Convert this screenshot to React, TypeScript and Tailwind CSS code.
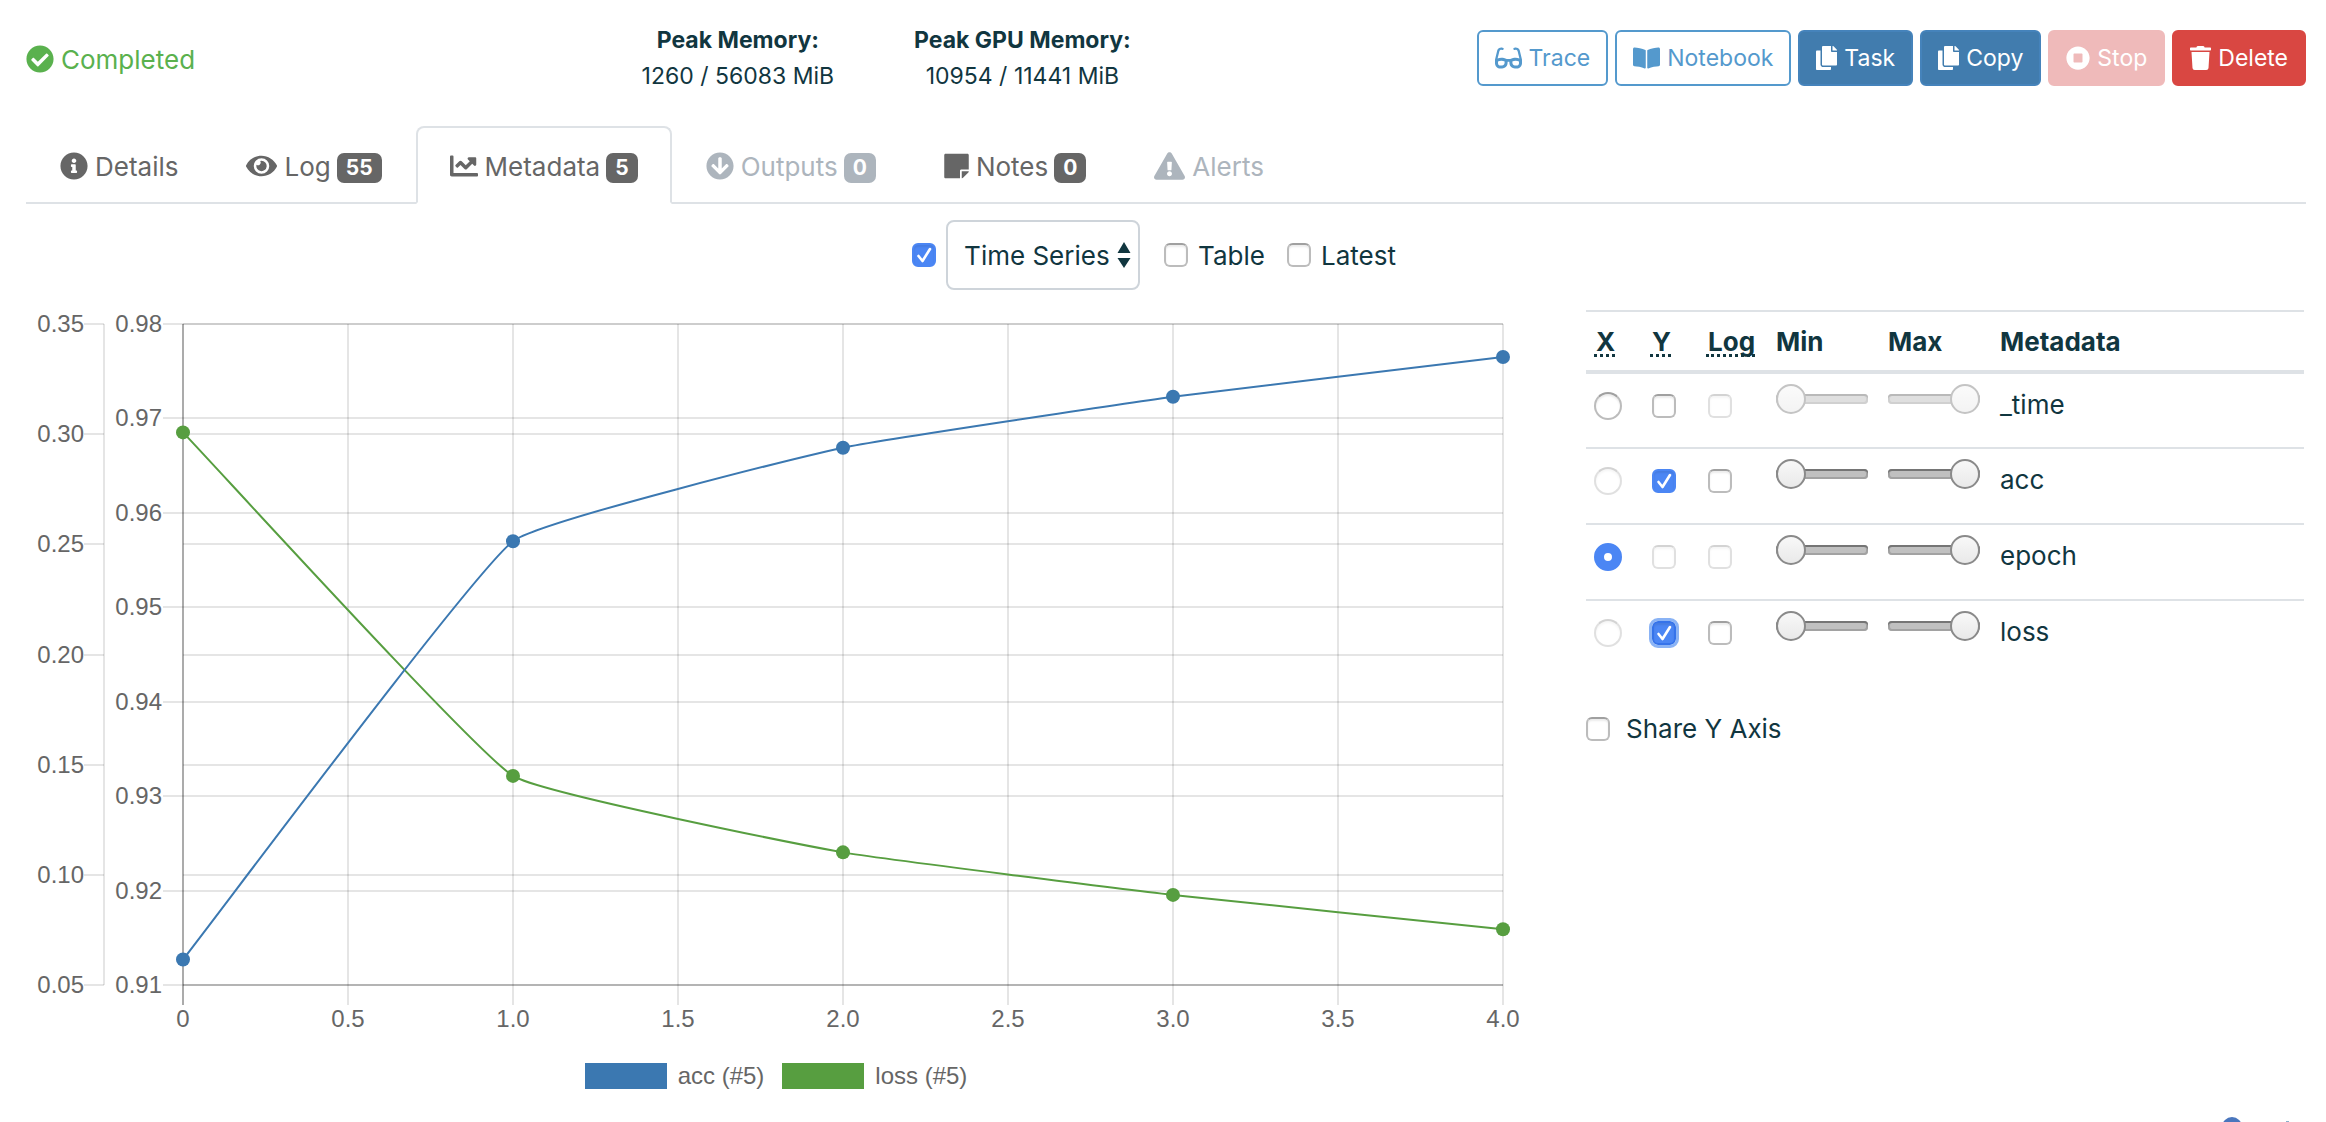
import React from "react";
import {
  FaBookOpen,
  FaCheckCircle,
  FaChartLine,
  FaCopy,
  FaExclamationTriangle,
  FaEye,
  FaGlasses,
  FaArrowCircleDown,
  FaInfoCircle,
  FaStickyNote,
  FaStopCircle,
  FaTrash,
} from "react-icons/fa";

type IconType = React.ComponentType<{ className?: string }>;

/* ---------- form controls ---------- */

type CheckProps = {
  id: string;
  label?: string;
  checked?: boolean;
  disabled?: boolean;
  ring?: boolean;
};

function Check({ id, label, checked, disabled, ring }: CheckProps) {
  return (
    <span className={`inline-grid size-6 shrink-0 ${disabled ? "opacity-45" : ""}`}>
      <input
        id={id}
        type="checkbox"
        aria-label={label}
        defaultChecked={checked}
        disabled={disabled}
        className={`peer [grid-area:1/1] size-6 appearance-none rounded-[6px] border-2 border-[#bcbcbc] border-t-[#a0a0a0] bg-white shadow-[inset_0_2px_2px_rgba(0,0,0,0.08)] checked:border-[#4b86f4] checked:bg-[#4b86f4] ${
          ring ? "outline-3 outline-[#8ab3f5] checked:border-[#3573ea]" : ""
        }`}
      />
      <svg
        viewBox="0 0 24 24"
        className="pointer-events-none invisible [grid-area:1/1] size-6 peer-checked:visible"
        aria-hidden="true"
      >
        <path
          d="M6.500 13l4 5L18 6"
          fill="none"
          stroke="white"
          strokeWidth="2.6"
          strokeLinecap="round"
          strokeLinejoin="round"
        />
      </svg>
    </span>
  );
}

function Radio({ label, checked, disabled }: { label: string; checked?: boolean; disabled?: boolean }) {
  return (
    <input
      type="radio"
      name="x-axis"
      aria-label={label}
      defaultChecked={checked}
      disabled={disabled}
      className="block size-7 appearance-none rounded-full border-2 border-[#bcbcbc] border-t-[#a0a0a0] bg-white shadow-[inset_0_2px_2px_rgba(0,0,0,0.08)] checked:border-[10px] checked:border-[#4b86f4] checked:shadow-none disabled:opacity-45"
    />
  );
}

function Range({ label, value, disabled }: { label: string; value: number; disabled?: boolean }) {
  return (
    <input
      type="range"
      aria-label={label}
      defaultValue={value}
      disabled={disabled}
      className="block h-[30px] w-[92px] appearance-none bg-transparent disabled:opacity-50 [&::-webkit-slider-runnable-track]:h-[10px] [&::-webkit-slider-runnable-track]:rounded-[4px] [&::-webkit-slider-runnable-track]:bg-[#c0c0c0] [&::-webkit-slider-runnable-track]:shadow-[inset_0_2px_0_#757575,inset_0_0_0_2px_#a2a2a2] [&::-webkit-slider-thumb]:-mt-[10px] [&::-webkit-slider-thumb]:size-[30px] [&::-webkit-slider-thumb]:appearance-none [&::-webkit-slider-thumb]:rounded-full [&::-webkit-slider-thumb]:border-2 [&::-webkit-slider-thumb]:border-[#8a8a8a] [&::-webkit-slider-thumb]:bg-linear-to-b [&::-webkit-slider-thumb]:from-[#f8f8f8] [&::-webkit-slider-thumb]:to-[#e9e9e9]"
    />
  );
}

/* ---------- header ---------- */

const outline = "border-[#5499cd] bg-white text-[#5499cd]";
const primary = "border-[#4583bb] bg-[#417cae] text-white";

const actions: { label: string; Icon: IconType; width: string; style: string; disabled?: boolean }[] = [
  { label: "Trace", Icon: FaGlasses, width: "w-[27px]", style: outline },
  { label: "Notebook", Icon: FaBookOpen, width: "w-[27px]", style: outline },
  { label: "Task", Icon: FaCopy, width: "w-[21px]", style: primary },
  { label: "Copy", Icon: FaCopy, width: "w-[21px]", style: primary },
  {
    label: "Stop",
    Icon: FaStopCircle,
    width: "w-6",
    style: "border-[#efbaba] bg-[#efbaba] text-white",
    disabled: true,
  },
  { label: "Delete", Icon: FaTrash, width: "w-[21px]", style: "border-[#d94742] bg-[#d94742] text-white" },
];

function Header() {
  return (
    <header className="flex items-center pt-[22px] pb-8">
      <div className="flex w-[27%] items-center gap-[7px] pt-[2px] text-[26px] text-[#5ab14e]">
        <FaCheckCircle className="size-7" />
        Completed
      </div>
      <dl className="flex gap-20 text-center text-[23px] leading-9">
        <div>
          <dt className="font-bold">Peak Memory:</dt>
          <dd>1260 / 56083 MiB</dd>
        </div>
        <div>
          <dt className="font-bold">Peak GPU Memory:</dt>
          <dd>10954 / 11441 MiB</dd>
        </div>
      </dl>
      <div className="ml-auto flex gap-[7px]">
        {actions.map(({ label, Icon, width, style, disabled }) => (
          <button
            key={label}
            type="button"
            disabled={disabled}
            className={`flex h-14 items-center gap-[7px] rounded-[6px] border-2 px-4 text-[23px] ${style}`}
          >
            <Icon className={`h-6 shrink-0 ${width}`} />
            {label}
          </button>
        ))}
      </div>
    </header>
  );
}

/* ---------- tabs ---------- */

const tabs: {
  label: string;
  Icon: IconType;
  width: string;
  count?: number;
  active?: boolean;
  disabled?: boolean;
}[] = [
  { label: "Details", Icon: FaInfoCircle, width: "w-7" },
  { label: "Log", Icon: FaEye, width: "w-[31px]", count: 55 },
  { label: "Metadata", Icon: FaChartLine, width: "w-7", count: 5, active: true },
  { label: "Outputs", Icon: FaArrowCircleDown, width: "w-7", count: 0, disabled: true },
  { label: "Notes", Icon: FaStickyNote, width: "w-[25px]", count: 0 },
  { label: "Alerts", Icon: FaExclamationTriangle, width: "w-[31px]", disabled: true },
];

function Tabs() {
  return (
    <nav className="flex border-b-2 border-[#dee2e6]">
      {tabs.map(({ label, Icon, width, count, active, disabled }) => (
        <a
          key={label}
          href={`#${label.toLowerCase()}`}
          aria-current={active ? "page" : undefined}
          aria-disabled={disabled}
          className={`-mb-[2px] flex h-[78px] items-center gap-1.5 rounded-t-[8px] border-2 px-8 pt-[2px] text-[26px] ${
            active ? "border-[#dee2e6] border-b-white bg-white" : "border-transparent"
          } ${disabled ? "text-[#adb5bd]" : "text-[#666]"}`}
        >
          <Icon className={`mr-px h-7 shrink-0 ${width}`} />
          {label}
          {count !== undefined && (
            <span
              className={`mt-1 rounded-[7px] px-[9px] text-[21px] leading-[30px] font-bold text-white ${
                disabled ? "bg-[#adb5bd]" : "bg-[#666]"
              }`}
            >
              {count}
            </span>
          )}
        </a>
      ))}
    </nav>
  );
}

/* ---------- view options ---------- */

function ViewOptions() {
  return (
    <div className="flex items-center justify-center pt-4 pr-6 text-[26px]">
      <Check id="view-chart" label="Show chart" checked />
      <span className="ml-[10px] inline-grid items-center">
        <select
          aria-label="Chart type"
          className="[grid-area:1/1] h-[70px] w-[194px] appearance-none rounded-[8px] border-2 border-[#ced4da] bg-white pl-4"
        >
          <option>Time Series</option>
        </select>
        <svg
          viewBox="0 0 14 28"
          className="pointer-events-none mr-[9px] h-7 w-[14px] justify-self-end [grid-area:1/1]"
          fill="currentColor"
          aria-hidden="true"
        >
          <path d="M7 1l6.500 11H.5zM7 27l6.500-10H.5z" />
        </svg>
      </span>
      <label htmlFor="view-table" className="ml-6 flex items-center gap-[10px]">
        <Check id="view-table" />
        Table
      </label>
      <label htmlFor="view-latest" className="ml-[22px] flex items-center gap-[10px]">
        <Check id="view-latest" />
        Latest
      </label>
    </div>
  );
}

/* ---------- chart ---------- */

const plot = { left: 157, right: 1477, top: 24, bottom: 685 };
const lossAxisX = 78;
const xTicks = ["0", "0.5", "1.0", "1.5", "2.0", "2.5", "3.0", "3.5", "4.0"];
const accTicks = ["0.98", "0.97", "0.96", "0.95", "0.94", "0.93", "0.92", "0.91"];
const lossTicks = ["0.35", "0.30", "0.25", "0.20", "0.15", "0.10", "0.05"];

const xAt = (v: number) => plot.left + ((plot.right - plot.left) * v) / 4;
const yAt = (v: number, min: number, max: number) =>
  plot.bottom - ((plot.bottom - plot.top) * (v - min)) / (max - min);
const spread = (i: number, n: number) => Math.round(plot.top + ((plot.bottom - plot.top) * i) / (n - 1));

type Point = [number, number];

const acc: Point[] = [0.9127, 0.957, 0.9669, 0.9723, 0.9765].map((v, i) => [xAt(i), yAt(v, 0.91, 0.98)]);
const loss: Point[] = [0.3008, 0.1449, 0.1102, 0.0909, 0.0753].map((v, i) => [xAt(i), yAt(v, 0.05, 0.35)]);

/* Cardinal-style spline whose control points are weighted by segment length. */
function spline(points: Point[], tension = 0.1) {
  const controls = points.map((p, i) => {
    const a = points[Math.max(i - 1, 0)];
    const b = points[Math.min(i + 1, points.length - 1)];
    const da = Math.hypot(p[0] - a[0], p[1] - a[1]);
    const db = Math.hypot(b[0] - p[0], b[1] - p[1]);
    const fa = (tension * da) / (da + db);
    const fb = (tension * db) / (da + db);
    const dx = b[0] - a[0];
    const dy = b[1] - a[1];
    return { before: [p[0] - fa * dx, p[1] - fa * dy], after: [p[0] + fb * dx, p[1] + fb * dy] };
  });
  return points
    .map((p, i) => (i === 0 ? `M${p}` : `C${controls[i - 1].after} ${controls[i].before} ${p}`))
    .join(" ");
}

function Series({ points, color }: { points: Point[]; color: string }) {
  return (
    <g fill={color}>
      <path d={spline(points)} fill="none" stroke={color} strokeWidth="2" />
      {points.map(([x, y]) => (
        <circle key={x} cx={x} cy={y} r="7" />
      ))}
    </g>
  );
}

function Chart() {
  return (
    <figure className="col-span-8">
      <svg viewBox="0 0 1500 740" className="block w-full" role="img" aria-label="acc and loss by epoch">
        <g stroke="black" strokeOpacity="0.1" strokeWidth="2">
          {xTicks.map((t, i) => {
            const x = Math.round(xAt(i / 2));
            return <line key={t} x1={x} x2={x} y1={plot.top} y2={plot.bottom + 20} />;
          })}
          {accTicks.map((t, i) => {
            const y = spread(i, accTicks.length);
            return <line key={t} x1={plot.left - 20} x2={plot.right} y1={y} y2={y} />;
          })}
          {lossTicks.map((t, i) => {
            const y = spread(i, lossTicks.length);
            return (
              <g key={t}>
                <line x1={lossAxisX - 20} x2={lossAxisX} y1={y} y2={y} />
                <line x1={plot.left} x2={plot.right} y1={y} y2={y} />
              </g>
            );
          })}
          <line x1={lossAxisX} x2={lossAxisX} y1={plot.top} y2={plot.bottom} />
          <line x1={plot.left} x2={plot.left} y1={plot.top} y2={plot.bottom + 20} strokeOpacity="0.25" />
          <line x1={plot.left} x2={plot.right} y1={plot.bottom} y2={plot.bottom} strokeOpacity="0.12" />
        </g>
        <g fontFamily="'Liberation Sans', Arial, sans-serif" fontSize="24" fill="#666">
          <g textAnchor="end">
            {accTicks.map((t, i) => (
              <text key={t} x={plot.left - 21} y={spread(i, accTicks.length) + 8}>
                {t}
              </text>
            ))}
            {lossTicks.map((t, i) => (
              <text key={t} x={lossAxisX - 20} y={spread(i, lossTicks.length) + 8}>
                {t}
              </text>
            ))}
          </g>
          <g textAnchor="middle">
            {xTicks.map((t, i) => (
              <text key={t} x={xAt(i / 2)} y={plot.bottom + 42}>
                {t}
              </text>
            ))}
          </g>
        </g>
        <Series points={loss} color="#579e40" />
        <Series points={acc} color="#3b78b1" />
      </svg>
      <figcaption className="mt-[18px] flex items-center justify-center gap-[18px] font-['Liberation_Sans',Arial,sans-serif] text-2xl leading-9 text-[#666]">
        <span className="flex items-center gap-[11px]">
          <span className="h-[26px] w-[82px] bg-[#3b78b1]" />
          acc (#5)
        </span>
        <span className="flex items-center gap-[11px]">
          <span className="h-[26px] w-[82px] bg-[#579e40]" />
          loss (#5)
        </span>
      </figcaption>
    </figure>
  );
}

/* ---------- metadata table ---------- */

type Row = {
  name: string;
  x?: boolean;
  y?: boolean;
  xOff?: boolean;
  yOff?: boolean;
  logOff?: boolean;
  rangeOff?: boolean;
  ring?: boolean;
};

const rows: Row[] = [
  { name: "_time", logOff: true, rangeOff: true },
  { name: "acc", xOff: true, y: true },
  { name: "epoch", x: true, yOff: true, logOff: true },
  { name: "loss", xOff: true, y: true, ring: true },
];

const dotted = "inline-block border-b-3 border-dotted border-[#11363f] pl-[2px] leading-6 no-underline";

function MetadataPanel() {
  return (
    <section className="col-span-4 pt-[10px] pr-[2px]">
      <table className="w-full table-fixed text-left text-[26px] leading-[38px]">
        <colgroup>
          <col className="w-14" />
          <col className="w-14" />
          <col className="w-[70px]" />
          <col className="w-28" />
          <col className="w-28" />
          <col />
        </colgroup>
        <thead className="border-t-2 border-b-4 border-[#dee2e6]">
          <tr className="h-[61px] [&>th]:px-2 [&>th]:pt-[2px] [&>th]:font-bold">
            <th scope="col">
              <abbr title="X axis" className={dotted}>X</abbr>
            </th>
            <th scope="col">
              <abbr title="Y axis" className={dotted}>Y</abbr>
            </th>
            <th scope="col" className="whitespace-nowrap">
              <abbr title="Logarithmic" className={dotted}>Log</abbr>
            </th>
            <th scope="col">Min</th>
            <th scope="col">Max</th>
            <th scope="col">Metadata</th>
          </tr>
        </thead>
        <tbody>
          {rows.map((r) => (
            <tr
              key={r.name}
              className="h-[76px] border-t-2 border-[#dee2e6] first:border-t-0 [&>td]:px-2 [&>td]:align-top"
            >
              <td className="pt-[18px]">
                <Radio label={`${r.name} on X axis`} checked={r.x} disabled={r.xOff} />
              </td>
              <td className="pt-5 leading-0">
                <div className="pl-[2px]">
                  <Check id={`y-${r.name}`} label={`${r.name} on Y axis`} checked={r.y} disabled={r.yOff} ring={r.ring} />
                </div>
              </td>
              <td className="pt-5 leading-0">
                <div className="pl-[2px]">
                  <Check id={`log-${r.name}`} label={`${r.name} log scale`} disabled={r.logOff} />
                </div>
              </td>
              <td className="pt-[10px]">
                <Range label={`${r.name} minimum`} value={0} disabled={r.rangeOff} />
              </td>
              <td className="pt-[10px]">
                <Range label={`${r.name} maximum`} value={100} disabled={r.rangeOff} />
              </td>
              <td className="pt-3">{r.name}</td>
            </tr>
          ))}
        </tbody>
      </table>
      <label htmlFor="share-y" className="mt-[33px] flex items-center gap-4 text-[26px]">
        <Check id="share-y" />
        Share Y Axis
      </label>
    </section>
  );
}

export default function App() {
  return (
    <div className="bg-white pr-5 pl-[26px] font-[Inter,sans-serif] text-[#11363f]">
      <Header />
      <Tabs />
      <ViewOptions />
      <main className="grid grid-cols-12 gap-x-[60px] pt-[10px]">
        <Chart />
        <MetadataPanel />
      </main>
      <footer className="flex justify-end pt-[23px] pr-4">
        <svg viewBox="0 0 70 5" className="h-[5px] w-[70px]" aria-hidden="true">
          <circle cx="12" cy="10" r="10" fill="#4a76bd" />
          <rect x="66" y="4" width="3" height="1" fill="#8ab0cc" />
        </svg>
      </footer>
    </div>
  );
}
